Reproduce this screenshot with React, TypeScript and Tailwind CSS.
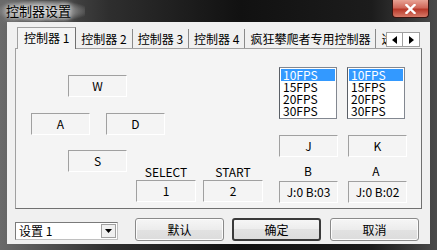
const Box = ({ children, className = "" }: { children?: React.ReactNode; className?: string }) => (
  <div
    className={`flex items-center justify-center h-[22px] w-[59px] border border-t-[#a0a0a0] border-l-[#a0a0a0] border-r-white border-b-white text-[12px] text-black ${className}`}
  >
    {children}
  </div>
);

const FpsList = () => (
  <div className="w-[58px] h-[52px] bg-white border border-[#828790] border-l-[#5a5f66] pl-[1px] pt-[1px] pr-[1px] text-[12px] leading-[12px]">
    {["10FPS", "15FPS", "20FPS", "30FPS"].map((f, i) => (
      <div
        key={f}
        className={
          i === 0
            ? "h-[12px] leading-[12px] pl-[2px] bg-[#3399ff] text-white"
            : "h-[12px] leading-[12px] pl-[2px] text-black"
        }
      >
        {f}
      </div>
    ))}
  </div>
);

const Btn = ({ label, primary = false, className = "" }: { label: string; primary?: boolean; className?: string }) => (
  <div
    className={`flex items-center justify-center w-[89px] h-[23px] rounded-[3px] text-[12px] text-black bg-[linear-gradient(#f6f6f6,#ececec_50%,#e2e2e2_50%,#dcdcdc)] ${
      primary ? "border-2 border-[#3a3a3a]" : "border border-[#8a8a8a] shadow-[inset_0_0_0_1px_#fcfcfc]"
    } ${className}`}
  >
    {label}
  </div>
);

const tabs = ["控制器 2", "控制器 3", "控制器 4", "疯狂攀爬者专用控制器", "选择"];

export default function App() {
  return (
    <div className="relative w-[437px] h-[250px] overflow-hidden bg-[linear-gradient(90deg,#6a6a6a_0%,#2e2e2e_25%,#111111_55%,#1c1c1c_85%,#4a4a4a_100%)] font-['Noto_Sans_CJK_SC',sans-serif]">
      {/* title bar */}
      <div className="h-[22px] flex items-center">
        <div className="h-[20px] flex items-center pl-[6px] pr-[14px] text-[13px] text-black bg-[radial-gradient(ellipse_at_center,rgba(215,215,215,0.85)_0%,rgba(170,170,170,0.5)_55%,transparent_80%)] [text-shadow:0_0_5px_#ffffff,0_0_9px_#e0e0e0]">
          控制器设置
        </div>
      </div>
      <div className="absolute left-[392px] top-0 w-[37px] h-[18px] rounded-b-[4px] border border-t-0 border-[#3a1410] bg-[linear-gradient(#e8a294,#d0685a_45%,#b8392a_55%,#d77a68)] flex items-center justify-center">
        <svg width="11" height="10" viewBox="0 0 11 10">
          <path d="M1.5 1 L9.5 9 M9.5 1 L1.5 9" stroke="#ffffff" strokeWidth="2.4" strokeLinecap="square" />
        </svg>
      </div>

      {/* client area */}
      <div className="ml-[7px] w-[423px] h-[222px] bg-[#f0f0f0] pl-[8px] pt-[4px]">
        {/* tab row */}
        <div className="relative flex items-end h-[22px] w-[407px] pl-[2px] text-[12px] text-black z-10">
          <div className="flex items-center h-[22px] px-[6px] mb-[-1px] pb-[2px] bg-[#f4f4f4] border border-b-0 border-[#a0a0a0] border-r-[#707070]">
            控制器 1
          </div>
          <div className="flex overflow-hidden w-[312px]">
            {tabs.map((t) => (
              <div key={t} className="flex items-center shrink-0 h-[19px] px-[5px] border-r border-[#8a8a8a] whitespace-nowrap">
                {t}
              </div>
            ))}
          </div>
          <div className="absolute right-[2px] top-[6px] flex bg-white">
            <div className="w-[17px] h-[15px] flex items-center justify-center border border-[#a0a0a0]">
              <svg width="5" height="8" viewBox="0 0 5 8"><path d="M5 0 L0 4 L5 8 Z" fill="#000" /></svg>
            </div>
            <div className="w-[17px] h-[15px] flex items-center justify-center border border-l-0 border-[#a0a0a0]">
              <svg width="5" height="8" viewBox="0 0 5 8"><path d="M0 0 L5 4 L0 8 Z" fill="#000" /></svg>
            </div>
          </div>
        </div>

        {/* tab panel */}
        <div className="flex w-[407px] h-[161px] border border-[#a0a0a0] border-r-[#707070] border-b-[#707070] bg-[#f4f4f4] pl-[15px] pt-[18px]">
          <div className="flex flex-col w-[248px]">
            <Box className="mt-[8px] ml-[37px]">W</Box>
            <div className="flex gap-[16px] mt-[16px]">
              <Box>A</Box>
              <Box>D</Box>
            </div>
            <div className="flex mt-[15px]">
              <Box className="ml-[37px]">S</Box>
              <div className="flex flex-col items-center w-[60px] ml-[9px] mt-[13px]">
                <div className="h-[17px] leading-[17px] text-[12px] text-black">SELECT</div>
                <Box className="w-[60px] h-[21px]">1</Box>
              </div>
              <div className="flex flex-col items-center w-[60px] ml-[7px] mt-[13px]">
                <div className="h-[17px] leading-[17px] text-[12px] text-black">START</div>
                <Box className="w-[60px] h-[21px]">2</Box>
              </div>
            </div>
          </div>
          <div className="flex flex-col">
            <div className="flex gap-[10px]">
              <FpsList />
              <FpsList />
            </div>
            <div className="flex gap-[10px] mt-[16px]">
              <Box className="w-[58px] h-[21px]">J</Box>
              <Box className="w-[58px] h-[21px]">K</Box>
            </div>
            <div className="flex gap-[10px]">
              <div className="w-[58px] h-[24px] pt-[7px] leading-[14px] text-center text-[12px] text-black">B</div>
              <div className="w-[58px] h-[24px] pt-[7px] leading-[14px] text-center text-[12px] text-black">A</div>
            </div>
            <div className="flex gap-[10px]">
              <Box className="w-[58px] h-[21px]">J:0 B:03</Box>
              <Box className="w-[58px] h-[21px]">J:0 B:02</Box>
            </div>
          </div>
        </div>

        {/* bottom row */}
        <div className="flex items-start mt-[9px]">
          <div className="flex items-center w-[103px] h-[18px] mt-[4px] bg-white border border-[#7a7a7a] border-r-[#c0c0c0] border-b-[#c0c0c0] text-[12px] text-black">
            <div className="flex-1 pl-[3px] leading-[16px]">设置 1</div>
            <div className="w-[15px] h-[14px] mr-[1px] flex items-center justify-center bg-[#f0f0f0] border border-[#a0a0a0]">
              <svg width="7" height="4" viewBox="0 0 7 4"><path d="M0 0 L7 0 L3.5 4 Z" fill="#000" /></svg>
            </div>
          </div>
          <Btn label="默认" className="ml-[17px]" />
          <Btn label="确定" primary className="ml-[8px]" />
          <Btn label="取消" className="ml-[9px]" />
        </div>
      </div>
    </div>
  );
}
